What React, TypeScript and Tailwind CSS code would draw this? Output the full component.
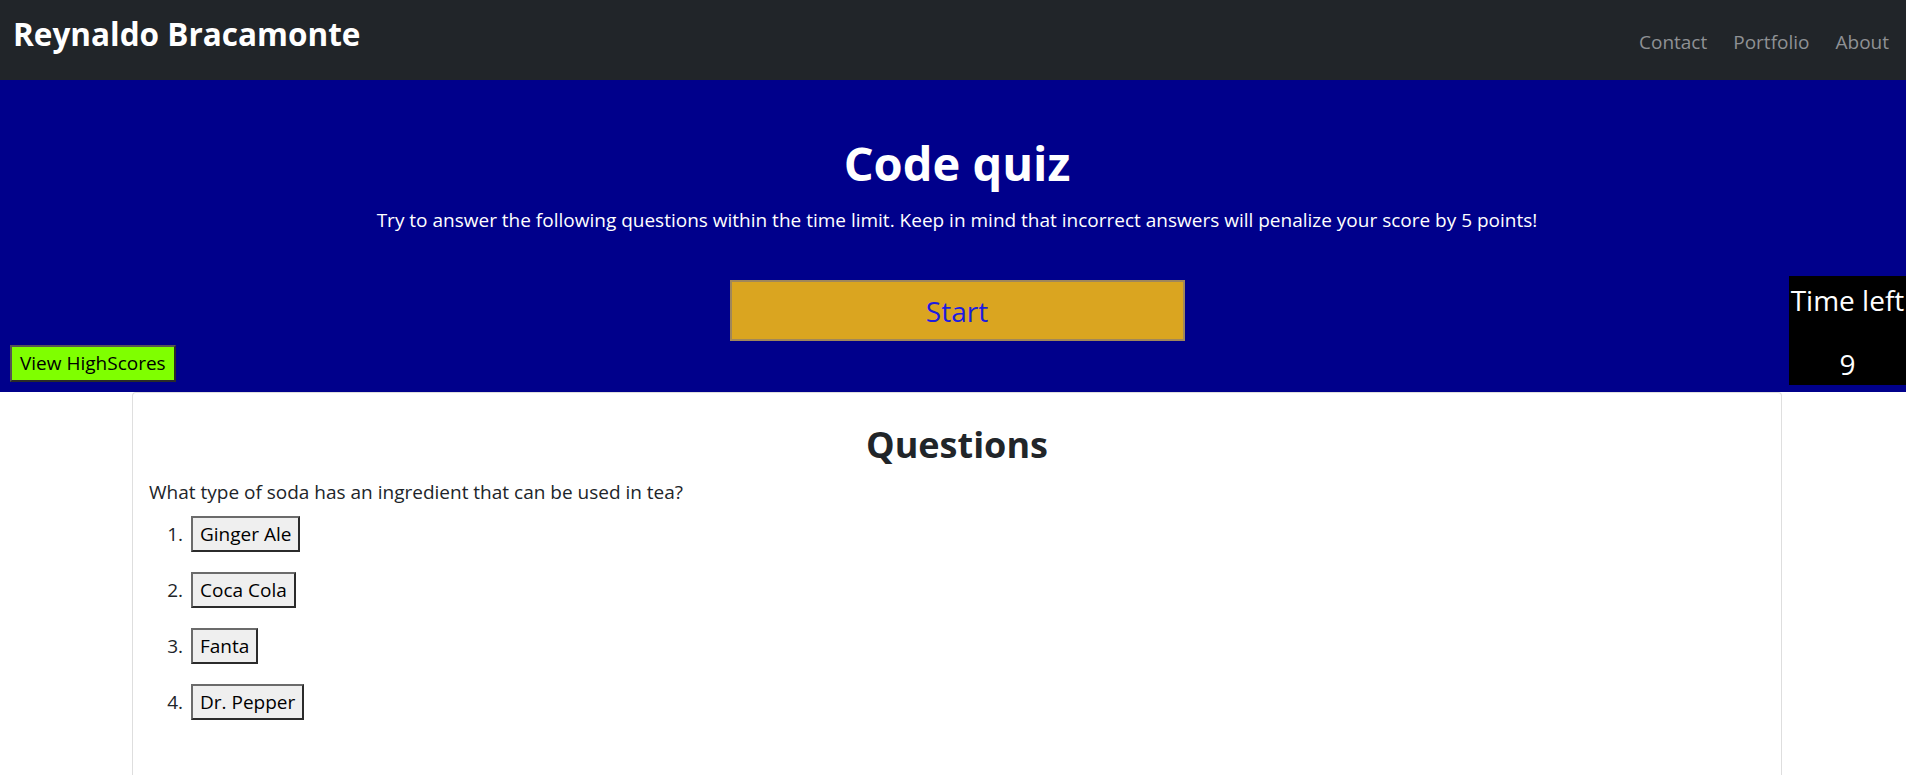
const ANSWERS = ["Ginger Ale", "Coca Cola", "Fanta", "Dr. Pepper"];

const NavBar = () => {
  return (
    <nav className="h-[80px] bg-[#212529] flex items-center justify-between">
      <a className="pl-[13px] pb-[12px] text-[31.5px] font-bold text-white leading-none">
        Reynaldo Bracamonte
      </a>
      <ul className="flex gap-[26px] pr-[17px] pt-[4px] text-[19px] text-[#8f9194]">
        <li>Contact</li>
        <li>Portfolio</li>
        <li>About</li>
      </ul>
    </nav>
  );
};

const Jumbotron = () => {
  return (
    <header className="relative h-[312px] bg-[#00008b] pl-[8px]">
      <div className="flex flex-col items-center pt-[54px] text-white">
        <h1 className="text-[47px] font-bold leading-[58px]">Code quiz</h1>
        <p className="mt-[14px] text-[19px] leading-[28px]">
          Try to answer the following questions within the time limit. Keep in
          mind that incorrect answers will penalize your score by 5 points!
        </p>
        <button className="mt-[46px] w-[455px] h-[61px] bg-[#daa520] border-2 border-[#a0875a] text-[28px] text-[#1c1ce0]">
          Start
        </button>
      </div>
      <button className="ml-[2px] mt-[4px] h-[37px] px-[8px] bg-[#7fff00] border-2 border-t-[#555] border-l-[#555] border-b-[#2a2a2a] border-r-[#2a2a2a] text-[19px] text-black">
        View HighScores
      </button>
      <div className="absolute right-0 top-[196px] w-[117px] h-[109px] bg-black text-white text-[28px] flex flex-col items-center">
        <span className="leading-[40px] mt-[4px] whitespace-nowrap">Time left</span>
        <span className="leading-[40px] mt-[24px]">9</span>
      </div>
    </header>
  );
};

const Questions = () => {
  return (
    <main className="pl-[8px]">
      <section className="mx-auto w-[1650px] h-[400px] bg-white border border-[rgba(0,0,0,0.125)] rounded-t-[4px] border-b-0 px-[16px] pt-[29px]">
        <h2 className="text-center text-[36px] font-bold leading-[46px] text-[#212529]">
          Questions
        </h2>
        <p className="mt-[10px] text-[19px] leading-[28px] text-[#212529]">
          What type of soda has an ingredient that can be used in tea?
        </p>
        <ol className="mt-[10px] flex flex-col gap-[20px]">
          {ANSWERS.map((answer, index) => (
            <li key={index} className="flex items-center">
              <span className="w-[34px] text-right text-[19px] text-[#212529]">
                {index + 1}.
              </span>
              <button className="ml-[8px] h-[36px] px-[7px] bg-[#efefef] border-2 border-t-[#6b6b6b] border-l-[#6b6b6b] border-b-[#2b2b2b] border-r-[#2b2b2b] text-[19px] text-black">
                {answer}
              </button>
            </li>
          ))}
        </ol>
      </section>
    </main>
  );
};

export default function App() {
  return (
    <div className="min-h-[775px] bg-white font-['Open_Sans',sans-serif] overflow-hidden">
      <NavBar />
      <Jumbotron />
      <Questions />
    </div>
  );
}
